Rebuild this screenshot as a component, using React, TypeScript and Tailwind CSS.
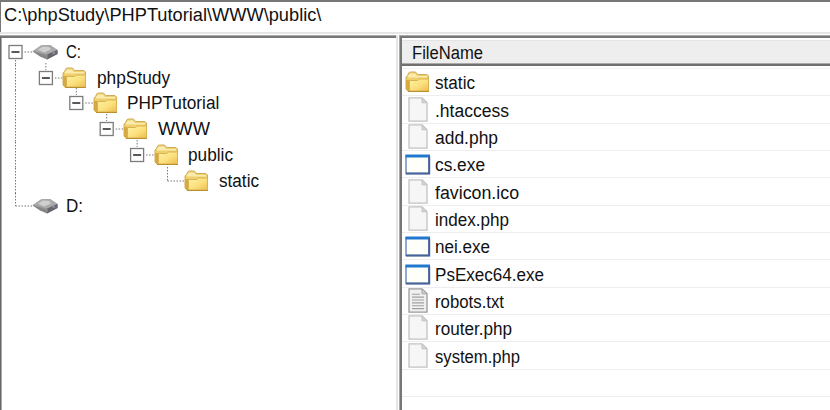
import { useLayoutEffect, useRef, useState } from "react";

function Label({ text, width }: { text: string; width: number }) {
  const ref = useRef<HTMLSpanElement>(null);
  const [scale, setScale] = useState(1);
  useLayoutEffect(() => {
    if (ref.current) setScale(width / ref.current.offsetWidth);
  }, [width, text]);
  return (
    <span className="block h-[22px] shrink-0 whitespace-pre text-[18px] leading-[22px] text-[#111]" style={{ width }}>
      <span ref={ref} className="inline-block origin-left" style={{ transform: `scaleX(${scale})` }}>
        {text}
      </span>
    </span>
  );
}

function Folder() {
  return (
    <svg width="25" height="22" viewBox="0 0 25 22" className="shrink-0">
      <defs>
        <linearGradient id="front" x1="0" y1="0" x2="1" y2="1">
          <stop offset="0" stopColor="#fff2a4" />
          <stop offset="0.55" stopColor="#fbdf7c" />
          <stop offset="1" stopColor="#ecbd4c" />
        </linearGradient>
      </defs>
      <path d="M1 18V6l1.500-1.500L4 1.500 5.500 1h5l2 2.500H22l1.500 1.500V20H3z" fill="#efcf6c" stroke="#d0ad5c" />
      <path d="M5 2.500h5l2 2.500h10v1.500H3V5z" fill="#faebae" />
      <path d="M1 9l3 0v11.500H3L1 18.500z" fill="#d6aa40" />
      <path d="M4.500 9.500h8L14.500 8H23.500v12h-19z" fill="url(#front)" stroke="#d9b352" />
      <path d="M3 20.500h21" stroke="#b98f30" />
    </svg>
  );
}

function Drive() {
  return (
    <svg width="26" height="16" viewBox="0 0 26 16" className="shrink-0">
      <path d="M0.500 7.500L9 1.500l9-.5 7.500 5v4L15 15.500 8 12.500z" fill="#868686" />
      <path d="M1 7l8-5.500 9-.5 7 5-10 5z" fill="#aaa" />
      <path d="M6 5.500l5-3 6 .5 2 2.500-7 3z" fill="#cfcfcf" />
      <path d="M15 10.500l10.500-4.500v4L15 15.500z" fill="#65656c" />
      <path d="M2 7.500l13 3.500v3" stroke="#989898" fill="none" />
      <path d="M20.500 9.500l2.500-1" stroke="#8c8c9e" strokeWidth="2" />
    </svg>
  );
}

function FileIcon({ lines = false }: { lines?: boolean }) {
  return (
    <svg width="20" height="25" viewBox="0 0 20 26" preserveAspectRatio="none" className="mb-[1px] ml-[3px] shrink-0">
      <path d="M1 1h13l5 5v19H1z" fill={lines ? "#f0f0f0" : "#f6f6f6"} stroke={lines ? "#9a9a9a" : "#c2c2c2"} strokeWidth="1.300" />
      <path d="M14 1v5h5z" fill="#d4d4d4" stroke={lines ? "#a0a0a0" : "#c2c2c2"} />
      {lines && <path d="M4 6.500h8M4 9.500h12M4 12.500h12M4 15.500h12M4 18.500h12M4 21.500h12" stroke="#a0a0a0" strokeWidth="1.200" />}
    </svg>
  );
}

function ExeIcon() {
  return (
    <svg width="26" height="21" viewBox="0 0 26 21" className="mt-[1px] shrink-0">
      <path d="M1 2h23v17.500H1z" fill="#fffffa" stroke="#6d8fc0" strokeWidth="1.500" />
      <path d="M0.500 0.500h24.500v3H.5z" fill="#2079cf" />
      <path d="M24.200 2.500V19.500H1" fill="none" stroke="#466398" strokeWidth="2" />
    </svg>
  );
}

const tree = [
  { name: "C:", kind: "drive", depth: 0, width: 15, open: true },
  { name: "phpStudy", kind: "folder", depth: 1, width: 73, open: true },
  { name: "PHPTutorial", kind: "folder", depth: 2, width: 92, open: true },
  { name: "WWW", kind: "folder", depth: 3, width: 52, open: true },
  { name: "public", kind: "folder", depth: 4, width: 45, open: true },
  { name: "static", kind: "folder", depth: 5, width: 40, open: false },
  { name: "D:", kind: "drive", depth: 0, width: 17, open: false },
];

const files = [
  { name: "static", kind: "folder", width: 40 },
  { name: ".htaccess", kind: "file", width: 74 },
  { name: "add.php", kind: "file", width: 63 },
  { name: "cs.exe", kind: "exe", width: 50 },
  { name: "favicon.ico", kind: "file", width: 84 },
  { name: "index.php", kind: "file", width: 74 },
  { name: "nei.exe", kind: "exe", width: 55 },
  { name: "PsExec64.exe", kind: "exe", width: 109 },
  { name: "robots.txt", kind: "text", width: 69 },
  { name: "router.php", kind: "file", width: 77 },
  { name: "system.php", kind: "file", width: 85 },
  { name: "", kind: "none", width: 0 },
  { name: "", kind: "none", width: 0 },
];

function TreeLines({ depth, open, last }: { depth: number; open: boolean; last: boolean }) {
  const x = 13.5 + depth * 30.4;
  const stroke = { stroke: "#777", strokeWidth: 1, strokeDasharray: "1.5 1.5" };
  return (
    <svg width={x + 16.5} height="26" className="shrink-0 overflow-visible">
      {depth > 0 && <path d={`M13.500 0v26M${x} ${open ? -2 : -1}V${open ? 5 : 13}`} {...stroke} />}
      {depth === 0 && <path d={last ? "M13.500 0v13" : "M13.500 21v5"} {...stroke} />}
      <path d={`M${x + (open ? 9 : 0)} 13H${x + 17}`} {...stroke} />
      {open && (
        <>
          <rect x={x - 6.5} y="6.500" width="13" height="13" fill="#fff" stroke="#7c7c7c" strokeWidth="1.300" />
          <path d={`M${x - 4} 13h8`} stroke="#222" strokeWidth="1.500" />
        </>
      )}
    </svg>
  );
}

export default function App() {
  return (
    <div className="flex h-[410px] w-[830px] flex-col overflow-hidden bg-white font-['Liberation_Sans',Arial,sans-serif]">
      <header className="flex h-[32px] shrink-0 items-start border-l border-t-2 border-l-[#777] border-t-[#777] pl-[3px] pt-[2px]">
        <Label text={"C:\\phpStudy\\PHPTutorial\\WWW\\public\\"} width={317} />
      </header>
      <div className="h-[2px] shrink-0 bg-[#e5e5e5]" />
      <div className="h-px shrink-0" />
      <main className="flex min-h-0 flex-1">
        <section className="w-[396px] shrink-0 border-t border-t-[#aaa]">
          <div className="h-full border-l border-t-2 border-l-[#666] border-t-[#777]">
            <div className="h-full border-l border-l-[#aaa] pt-[1px]">
              {tree.map((node, i) => (
                <div key={i} className="flex h-[25.75px] items-center">
                  <TreeLines depth={node.depth} open={node.open} last={i === tree.length - 1} />
                  {node.kind === "drive" ? <Drive /> : <Folder />}
                  <div className={node.kind === "drive" ? "ml-[8px]" : "ml-[9.5px]"}>
                    <Label text={node.name} width={node.width} />
                  </div>
                </div>
              ))}
            </div>
          </div>
        </section>
        <div className="mr-[1px] w-[2px] shrink-0 bg-[#e5e5e5]" />
        <section className="min-w-0 flex-1 border-l border-t border-l-[#aaa] border-t-[#aaa]">
          <div className="h-full border-l-2 border-t-2 border-l-[#777] border-t-[#777]">
            <div className="h-[28px] border-b-2 border-b-[#707070] pt-[2px]">
              <div className="flex h-[24px] items-center border-b border-t border-b-[#aaa] border-t-[#e4e4e4] bg-[#eee] pl-[10px] pt-[2px]">
                <Label text="FileName" width={71} />
              </div>
            </div>
            <div className="h-[3px] border-b border-b-[#f3f3f3]" />
            {files.map((file, i) => (
              <div key={i} className="flex h-[27.35px] items-center border-b border-b-[#eee] pl-[3px]">
                <div className="flex w-[30px] shrink-0">
                  {file.kind === "folder" && <Folder />}
                  {file.kind === "file" && <FileIcon />}
                  {file.kind === "text" && <FileIcon lines />}
                  {file.kind === "exe" && <ExeIcon />}
                </div>
                {file.name && (
                  <div className="pt-[2px]">
                    <Label text={file.name} width={file.width} />
                  </div>
                )}
              </div>
            ))}
          </div>
        </section>
      </main>
    </div>
  );
}
